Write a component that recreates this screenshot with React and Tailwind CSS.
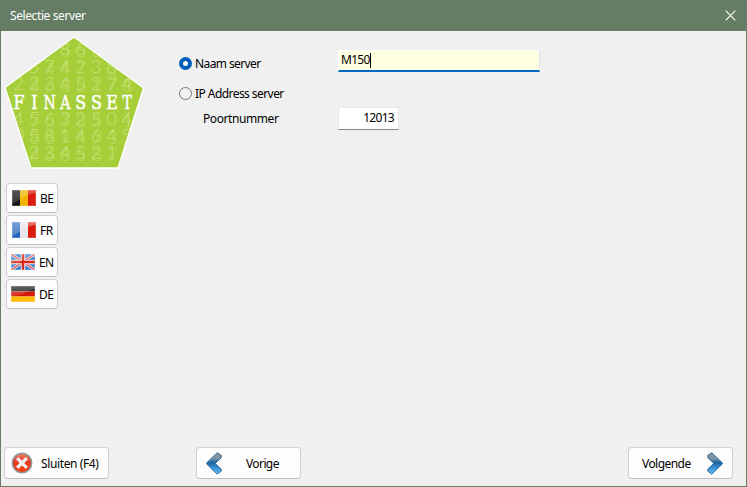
import React from 'react';

const columns = [19, 34.3, 49.7, 65.2, 80.7, 96.5, 112, 127.2];
const rows = [
  { y: 56, a: '   86 5 ', b: '   556  ' },
  { y: 73.5, a: ' 5742385', b: '  447 38' },
  { y: 91, a: '22345274', b: ' 4688178' },
  { y: 125.5, a: '45632504', b: ' 75785 1' },
  { y: 142.5, a: '05814645', b: ' 889473 ' },
  { y: 159.5, a: ' 234521 ', b: ' 468587 ' },
];
// Centres of the columns that each digit row is laid on
const digits = (text) =>
  text.split('').map((c, i) => ({ c, x: columns[i] })).filter((d) => d.c !== ' ');

function Logo() {
  return (
    <svg className="block" width="150" height="145" viewBox="1 31 150 145">
      <defs>
        <clipPath id="pentagon"><path d="M74 37.5 143 88 118 167.5H31.5L5.7 87.5Z" /></clipPath>
      </defs>
      <path d="M74 37 143.5 88 118 168H31L5 87.5Z" fill="#a6ce39" stroke="#fff" strokeWidth="1.3" />
      <g clipPath="url(#pentagon)" fill="#d3e88e" fontFamily="Lato, sans-serif" fontWeight="300" fontSize="18.5" textAnchor="middle">
        {rows.map((r) => digits(r.a).map((d) => <text key={'a' + r.y + d.x} x={d.x - 0.3} y={r.y - 0.7} fillOpacity=".75">{d.c}</text>))}
        {rows.map((r) => digits(r.b).map((d) => <text key={'b' + r.y + d.x} x={d.x + 0.3} y={r.y + 1.3} fillOpacity=".5">{d.c}</text>))}
      </g>
      <g fill="#fff" fontFamily="'DejaVu Serif', serif" fontSize="18.5" textAnchor="middle">
        {'FINASSET'.split('').map((c, i) => (
          <text key={i} transform={`translate(${columns[i]} 108.8) scale(${c === 'N' || c === 'A' || c === 'T' ? 0.76 : 0.86} 1)`} stroke="#fff" strokeWidth=".5">{c}</text>
        ))}
      </g>
    </svg>
  );
}

function Flag({ code }) {
  return (
    <svg className="block shrink-0" width="24" height="16" viewBox="0 0 24 16">
      <defs>
        <linearGradient id={'shine' + code} x1="0" y1="0" x2="0" y2="1">
          <stop offset="0" stopColor="#fff" stopOpacity=".38" />
          <stop offset="1" stopColor="#fff" stopOpacity=".2" />
        </linearGradient>
      </defs>
      {code === 'BE' && <><path fill="#151515" d="M0 0h8v16H0z" /><path fill="#f0b400" d="M8 0h8v16H8z" /><path fill="#d91c0b" d="M16 0h8v16h-8z" /></>}
      {code === 'FR' && <><path fill="#2364bd" d="M0 0h8v16H0z" /><path fill="#e4e4e9" d="M8 0h8v16H8z" /><path fill="#d91c0b" d="M16 0h8v16h-8z" /></>}
      {code === 'EN' && <>
        <path fill="#3a83d6" d="M0 0h24v16H0z" />
        <path stroke="#f0dfe4" strokeWidth="2.8" d="m0 0 24 16M24 0 0 16" />
        <path stroke="#dd5044" strokeWidth="1.1" d="m0 0 24 16M24 0 0 16" />
        <path stroke="#f3e9ec" strokeWidth="4.4" d="M12 0v16M0 8h24" />
        <path stroke="#d52a18" strokeWidth="2.4" d="M12 0v16M0 8h24" />
      </>}
      {code === 'DE' && <><path fill="#222" d="M0 0h24v5.5H0z" /><path fill="#d51808" d="M0 5.5h24v5H0z" /><path fill="#f9bd08" d="M0 10.5h24V16H0z" /></>}
      <path d={code === 'DE' ? 'M0 0h24v3Q17 5 11 8 6 10 0 10Z' : 'M0 0h24v3Q14 4 8 9 4 13 0 14Z'} fill={`url(#shine${code})`} fillOpacity={code === 'FR' ? 1 : code === 'EN' ? 0.55 : 0.7} />
      <path d="M.5.5h23v15H.5z" fill="none" stroke="#fff" strokeOpacity=".18" />
    </svg>
  );
}

function Chevron({ flip }) {
  return (
    <svg className={flip ? 'block shrink-0 -scale-x-100' : 'block shrink-0'} width="16" height="23" viewBox="0 0 16 23">
      <defs>
        <linearGradient id={flip ? 'steelR' : 'steelL'} x1="0" y1="0" x2="0" y2="1">
          <stop offset="0" stopColor="#8a9299" />
          <stop offset=".27" stopColor="#7b95a8" />
          <stop offset=".46" stopColor="#1b649f" />
          <stop offset=".72" stopColor="#3b93d8" />
          <stop offset="1" stopColor="#6cc0f8" />
        </linearGradient>
      </defs>
      <path d="M11.2.7 15.2 3.2v2.6L9.2 11.4l6 5.6v2.2l-4 3L.6 11.9v-1Z" fill={flip ? 'url(#steelR)' : 'url(#steelL)'} stroke="#2c6696" strokeWidth=".9" strokeLinejoin="round" />
    </svg>
  );
}

function CloseIcon() {
  return (
    <svg className="block shrink-0" width="22" height="22" viewBox="0 0 22 22">
      <defs>
        <linearGradient id="red" x1="0" y1="0" x2="0" y2="1">
          <stop offset="0" stopColor="#ee8068" /><stop offset=".45" stopColor="#df3c20" /><stop offset="1" stopColor="#ff3e12" />
        </linearGradient>
      </defs>
      <circle cx="11" cy="11" r="9.7" fill="url(#red)" stroke="#8e979b" strokeWidth="1.5" />
      <path d="m7.4 7.4 7.2 7.2m0-7.2-7.2 7.2" stroke="#f4f2f2" strokeWidth="3.3" strokeLinecap="square" />
    </svg>
  );
}

const button = 'flex items-center rounded-[4px] border border-[#d0d0d0] border-b-[#bdbdbd] bg-[#fdfdfd] whitespace-nowrap';

export default function App() {
  return (
    <div className="flex h-[487px] w-[747px] flex-col overflow-hidden border border-t-0 border-[#647d64] bg-[#f0f0f0] font-['Noto_Sans','Open_Sans',sans-serif] text-[12px] leading-4 text-black">
      <header className="flex h-[31px] shrink-0 items-center justify-between bg-[#647d64] pr-[10px] pl-[9px] text-white">
        <h1 className="pt-px tracking-[-0.4px]">Selectie server</h1>
        <svg className="-mt-px" width="11" height="11" viewBox="0 0 11 11"><path d="m.7.7 9.6 9.6m0-9.6L.7 10.3" stroke="#fff" strokeWidth="1.1" /></svg>
      </header>
      <main className="flex h-[416px] shrink-0">
        <aside className="w-[178px]">
          <Logo />
          <div className="mt-[7px] ml-[5px] flex flex-col gap-[2px]">
            {['BE', 'FR', 'EN', 'DE'].map((code) => (
              <button key={code} className={`${button} h-[30px] w-[52px] ${code === 'EN' || code === 'DE' ? 'gap-1 pl-1' : 'gap-1 pl-[5px]'}`}>
                <Flag code={code} /><span className="pt-[2px] tracking-[-0.6px]">{code}</span>
              </button>
            ))}
          </div>
        </aside>
        <form className="grid grid-cols-[159px_202px] grid-rows-[22px_35px_23px] content-start pt-[19px]">
          <label className="mt-[5px] flex h-4 items-center gap-[3px]">
            <span className="size-[13px] rounded-full border-4 border-[#005fb8] bg-white" />
            <span className="pt-[2px] tracking-[-0.6px]">Naam server</span>
          </label>
          <div className="flex h-[22px] items-center border border-b-2 border-white border-r-[#dfe0ea] border-b-[#0067c0] bg-[#ffffe1] pl-[2px] pb-px">
            <span className="tracking-[-0.7px]">M150</span><span className="h-[15px] w-px bg-black" />
          </div>
          <label className="col-span-2 mt-[13px] flex h-4 items-center gap-[3px]">
            <span className="size-[13px] rounded-full border border-[#777] bg-[#f3f3f3]" />
            <span className="pt-[2px] tracking-[-0.56px]">IP Address server</span>
          </label>
          <span className="mt-[4px] pl-[24px] tracking-[-0.42px]">Poortnummer</span>
          <div className="flex h-[23px] w-[61px] items-center justify-end border border-[#e8e8e8] border-b-[#868686] bg-white pr-[4px] pb-px tracking-[-0.7px]">12013</div>
        </form>
      </main>
      <footer className="flex h-[39px] items-start pr-[13px] pl-[3px]">
        <button className={`${button} h-8 w-[105px] gap-2 pl-[6px]`}><CloseIcon /><span className="pt-[2px] tracking-[-0.38px]">Sluiten (F4)</span></button>
        <button className={`${button} ml-[87px] h-8 w-[105px] gap-6 pl-[9px]`}><Chevron /><span className="pt-[2px] tracking-[-0.6px]">Vorige</span></button>
        <button className={`${button} ml-auto h-8 w-[105px] justify-between pr-[9px] pl-[13px]`}><span className="pt-[2px] tracking-[-0.55px]">Volgende</span><Chevron flip /></button>
      </footer>
    </div>
  );
}
